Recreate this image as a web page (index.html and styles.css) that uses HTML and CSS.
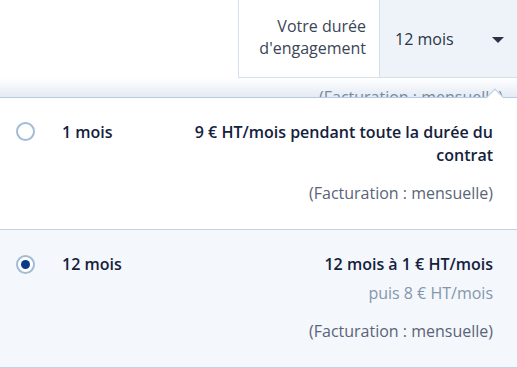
FILE: index.html
```html
<!DOCTYPE html>
<html lang="fr">
<head>
<meta charset="utf-8">
<link rel="stylesheet" href="styles.css">
</head>
<body>
<div class="top">
  <div class="field">
    <div class="field-label">Votre durée<br>d'engagement</div>
    <div class="select">
      <span class="select-value">12 mois</span>
      <span class="caret"></span>
    </div>
  </div>
</div>
<div class="behind">
  <div class="behind-text">(Facturation : mensuelle)</div>
</div>
<div class="dropdown">
  <div class="option">
    <span class="radio"></span>
    <span class="opt-name">1 mois</span>
    <div class="opt-detail">
      <div class="price">9 € HT/mois pendant toute la durée du<br>contrat</div>
      <div class="billing">(Facturation : mensuelle)</div>
    </div>
  </div>
  <div class="option selected">
    <span class="radio"></span>
    <span class="opt-name">12 mois</span>
    <div class="opt-detail">
      <div class="price">12 mois à 1 € HT/mois</div>
      <div class="then">puis 8 € HT/mois</div>
      <div class="billing">(Facturation : mensuelle)</div>
    </div>
  </div>
</div>
</body>
</html>
```
FILE: styles.css
```css
* { box-sizing: border-box; }
html, body { margin: 0; padding: 0; }
body {
  width: 517px;
  height: 368px;
  overflow: hidden;
  background: #ffffff;
  font-family: "Open Sans", "Noto Sans", sans-serif;
  font-size: 16px;
  color: #14213d;
}
.top {
  display: flex;
  justify-content: flex-end;
  height: 78px;
}
.field {
  display: flex;
  width: 290px;
  margin-right: -11px;
  height: 78px;
  border: 1px solid #d6e0ea;
  border-top: none;
}
.field-label {
  width: 141px;
  background: #fff;
  color: #3b4558;
  text-align: right;
  line-height: 22px;
  padding: 15px 13px 0 0;
  border-right: 1px solid #d6e0ea;
}
.select {
  flex: 1;
  display: flex;
  align-items: center;
  background: #eef3f9;
  padding: 0 0 0 15px;
  height: 77px;
}
.select-value {
  font-size: 16px;
  color: #2a3346;
  flex: 1;
}
.caret {
  width: 0;
  height: 0;
  border-left: 6px solid transparent;
  border-right: 6px solid transparent;
  border-top: 6px solid #2b3447;
  margin-right: 23px;
  margin-top: 2px;
}
.behind {
  height: 19px;
  overflow: hidden;
  background: linear-gradient(#ffffff, #e4ebf4);
  display: flex;
  justify-content: flex-end;
  padding-right: 14px;
}
.behind-text {
  margin-top: 8px;
  color: #7688a0;
  line-height: 23px;
  white-space: nowrap;
}
.dropdown {
  position: relative;
  border-top: 1px solid #b8cadf;
  background: #fff;
}
.dropdown::before {
  content: "";
  position: absolute;
  top: -7px;
  right: 16px;
  width: 11px;
  height: 11px;
  background: #fff;
  border-top: 1px solid #b8cadf;
  border-left: 1px solid #b8cadf;
  transform: rotate(45deg);
}
.option {
  position: relative;
  display: grid;
  grid-template-columns: 62px 1fr auto;
  align-items: start;
  padding: 23px 24px 24px 0;
  border-bottom: 1px solid #c3d2e3;
}
.option.selected {
  background: #f4f7fb;
  padding-top: 23px;
  padding-bottom: 24px;
}
.radio {
  justify-self: start;
  margin-left: 16px;
  margin-top: 1px;
  width: 19px;
  height: 19px;
  border-radius: 50%;
  border: 2px solid #a3bbd6;
  background: #fff;
  display: flex;
  align-items: center;
  justify-content: center;
}
.selected .radio { margin-top: 2px; }
.selected .radio::after {
  content: "";
  width: 9px;
  height: 9px;
  border-radius: 50%;
  background: #0b3a86;
}
.opt-name {
  font-weight: 600;
  line-height: 23px;
  color: #14213d;
}
.opt-detail {
  text-align: right;
  line-height: 23px;
}
.price {
  font-weight: 600;
  color: #14213d;
}
.then {
  margin-top: 6px;
  color: #8496ad;
}
.billing {
  margin-top: 15px;
  color: #5a6478;
}
```
